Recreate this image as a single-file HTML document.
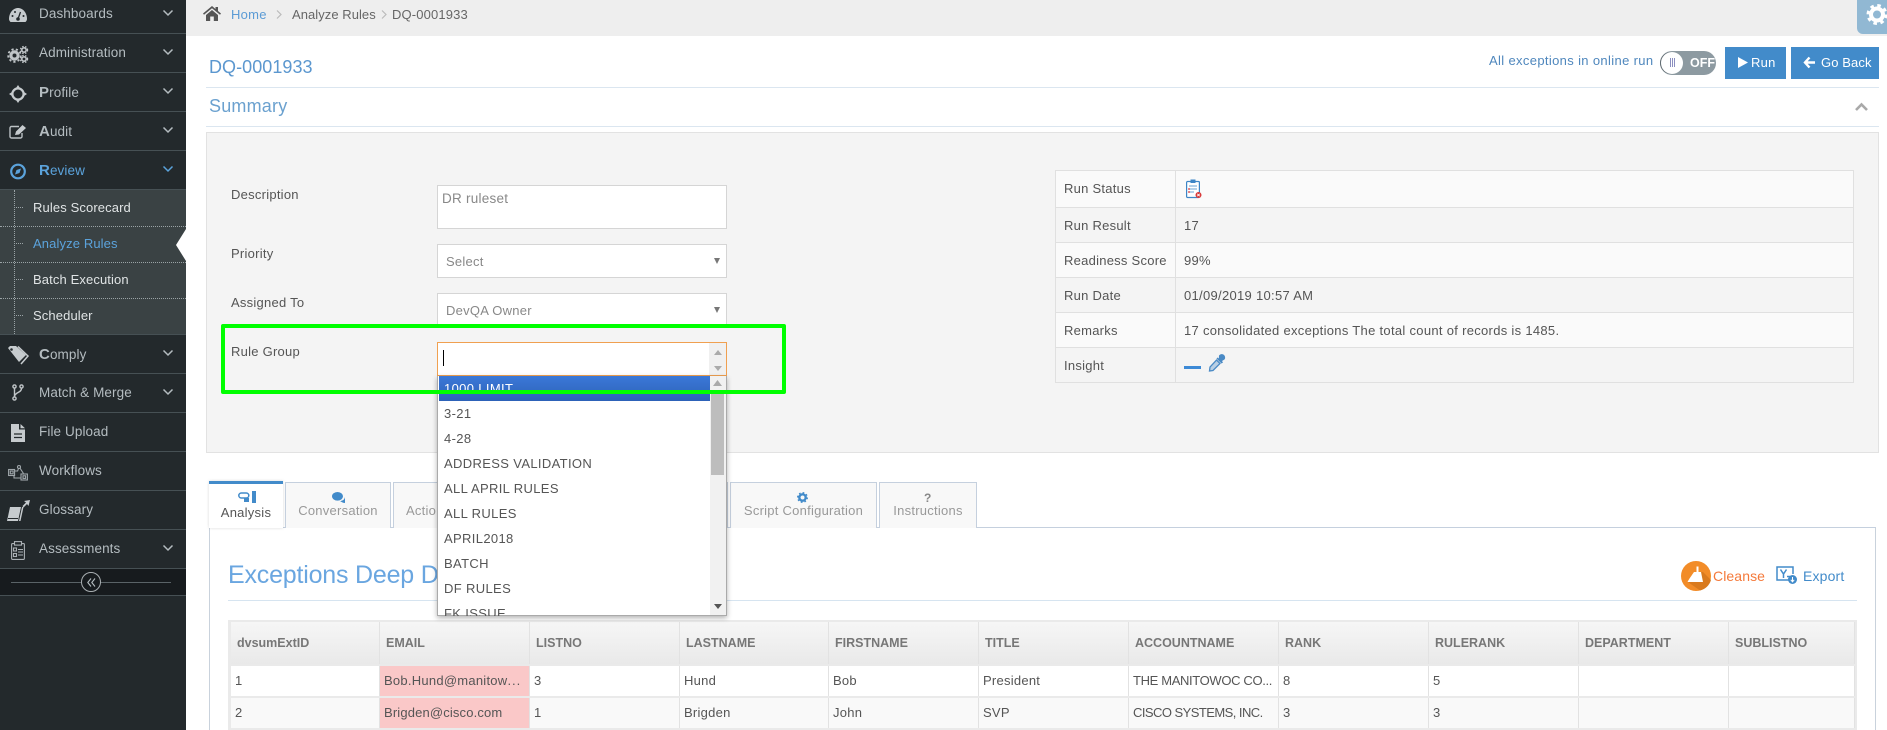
<!DOCTYPE html>
<html lang="en"><head><meta charset="utf-8"><title>DQ-0001933</title>
<style>
*{box-sizing:border-box}
html,body{margin:0;padding:0;width:1887px;height:730px;overflow:hidden;background:#fff}
body{position:relative;font-family:"Liberation Sans",Arial,sans-serif;font-size:13px;letter-spacing:.25px;color:#555}
.a{position:absolute}
.t{position:absolute;line-height:20px;height:20px;white-space:nowrap}
.sb{position:absolute;left:0;top:0;width:186px;height:730px;background:#23292c}
.sep{position:absolute;left:0;width:186px;height:1px;background:#465054}
.nav{position:absolute;left:39px;margin-top:1px;line-height:20px;height:20px;color:#b4bcc0;font-size:13.5px;letter-spacing:.1px;white-space:nowrap}
.nav b{font-size:15px}
.sub{position:absolute;left:33px;margin-top:1px;line-height:20px;height:20px;color:#e0e4e5;font-size:13px;letter-spacing:.12px;white-space:nowrap}
.dot{position:absolute;left:0;width:186px;border-top:1px dotted #9aa3a6}
.dh{position:absolute;left:16px;width:7px;border-top:1px dotted #9aa3a6}
svg{position:absolute;overflow:visible}
.chev{position:absolute;left:163px;width:10px;height:6px}
.field{position:absolute;left:437px;width:290px;background:#fff;border:1px solid #d5d5d5}
.lab{position:absolute;left:231px;margin-top:1px;line-height:20px;height:20px;color:#555}
.arr{position:absolute;left:714px;width:0;height:0;border-left:3.5px solid transparent;border-right:3.5px solid transparent;border-top:6px solid #777}
.rt{position:absolute;left:1055px;width:799px;border:1px solid #e0e0e0}
.rt div{position:absolute}
.rw{left:0;width:797px;border-bottom:1px solid #e0e0e0}
.rl{position:absolute;left:1064px;margin-top:1px;line-height:20px;color:#555;white-space:nowrap}
.rv{position:absolute;left:1184px;margin-top:1px;line-height:20px;color:#555;white-space:nowrap;letter-spacing:.3px}
.tab{position:absolute;top:482px;height:46px;border:1px solid #c5d0de;border-bottom:none;background:#f8f8f8;text-align:center;color:#999;line-height:20px;padding-top:18px;white-space:nowrap}
.opt{position:absolute;left:444px;margin-top:1px;line-height:20px;height:20px;color:#555;white-space:nowrap;letter-spacing:.35px}
.th{position:absolute;top:622px;height:42px;line-height:42px;font-weight:bold;color:#777;font-size:12.5px;padding-left:6px;letter-spacing:0;white-space:nowrap;background:linear-gradient(#f6f6f6,#e9e9e9);border-right:1px solid #e2e2e2}
.td{position:absolute;height:30px;line-height:30px;color:#555;padding-left:4px;white-space:nowrap;overflow:hidden;border-right:1px solid #e2e2e2}
.dots{letter-spacing:1px}
</style></head><body>

<!-- Sidebar -->
<div class="sb"></div>
<div class="a" style="left:0;top:190px;width:186px;height:144px;background:#3a4244"></div>
<div class="a" style="left:0;top:569px;width:186px;height:26px;background:#171b1e"></div>
<div class="sep" style="top:33px"></div><div class="sep" style="top:72px"></div><div class="sep" style="top:111px"></div><div class="sep" style="top:150px"></div><div class="sep" style="top:189px"></div>
<div class="sep" style="top:334px"></div><div class="sep" style="top:373px"></div><div class="sep" style="top:412px"></div><div class="sep" style="top:451px"></div><div class="sep" style="top:490px"></div><div class="sep" style="top:529px"></div><div class="sep" style="top:568px"></div><div class="sep" style="top:595px"></div>

<div class="nav" style="top:3px">Dashboards</div>
<div class="nav" style="top:42px">Administration</div>
<div class="nav" style="top:82px"><b>P</b>rofile</div>
<div class="nav" style="top:121px"><b>A</b>udit</div>
<div class="nav" style="top:160px;color:#5ba3dc"><b>R</b>eview</div>
<div class="sub" style="top:197px">Rules Scorecard</div>
<div class="sub" style="top:233px;color:#5ba3dc">Analyze Rules</div>
<div class="sub" style="top:269px">Batch Execution</div>
<div class="sub" style="top:305px">Scheduler</div>
<div class="nav" style="top:344px"><b>C</b>omply</div>
<div class="nav" style="top:382px">Match &amp; Merge</div>
<div class="nav" style="top:421px">File Upload</div>
<div class="nav" style="top:460px">Workflows</div>
<div class="nav" style="top:499px">Glossary</div>
<div class="nav" style="top:538px">Assessments</div>

<div class="a" style="left:14px;top:190px;height:144px;border-left:1px dotted #9aa3a6"></div>
<div class="dot" style="top:226px"></div><div class="dot" style="top:262px"></div><div class="dot" style="top:298px"></div>
<div class="dh" style="top:207px"></div><div class="dh" style="top:243px"></div><div class="dh" style="top:279px"></div><div class="dh" style="top:315px"></div>
<svg style="left:176px;top:229px" width="10" height="32"><path d="M10 0L0 16L10 32Z" fill="#fff"/></svg>

<!-- chevrons -->
<svg class="chev" style="top:10px" viewBox="0 0 10 6"><path d="M.5.5L5 5L9.500.5" fill="none" stroke="#b4bcc0" stroke-width="1.500"/></svg>
<svg class="chev" style="top:49px" viewBox="0 0 10 6"><path d="M.5.5L5 5L9.500.5" fill="none" stroke="#b4bcc0" stroke-width="1.500"/></svg>
<svg class="chev" style="top:88px" viewBox="0 0 10 6"><path d="M.5.5L5 5L9.500.5" fill="none" stroke="#b4bcc0" stroke-width="1.500"/></svg>
<svg class="chev" style="top:127px" viewBox="0 0 10 6"><path d="M.5.5L5 5L9.500.5" fill="none" stroke="#b4bcc0" stroke-width="1.500"/></svg>
<svg class="chev" style="top:166px" viewBox="0 0 10 6"><path d="M.5.5L5 5L9.500.5" fill="none" stroke="#5ba3dc" stroke-width="1.500"/></svg>
<svg class="chev" style="top:350px" viewBox="0 0 10 6"><path d="M.5.5L5 5L9.500.5" fill="none" stroke="#b4bcc0" stroke-width="1.500"/></svg>
<svg class="chev" style="top:389px" viewBox="0 0 10 6"><path d="M.5.5L5 5L9.500.5" fill="none" stroke="#b4bcc0" stroke-width="1.500"/></svg>
<svg class="chev" style="top:545px" viewBox="0 0 10 6"><path d="M.5.5L5 5L9.500.5" fill="none" stroke="#b4bcc0" stroke-width="1.500"/></svg>

<!-- sidebar icons -->
<svg style="left:9px;top:8px" width="18" height="14" viewBox="0 0 18 14"><path d="M0 11C0 5 4 0 9 0s9 5 9 11c0 1-.5 2-1.500 3H1.500C.5 13 0 12 0 11Z" fill="#c6cbce"/><circle cx="9" cy="11" r="1.800" fill="#23292c"/><path d="M9 11L11.500 4" stroke="#23292c" stroke-width="1.300"/><circle cx="3.500" cy="8" r="1" fill="#23292c"/><circle cx="6" cy="4" r="1" fill="#23292c"/><circle cx="14.500" cy="8" r="1" fill="#23292c"/></svg>
<svg style="left:8px;top:46px" width="20" height="17" viewBox="0 0 20 17"><circle cx="6.500" cy="9.500" r="3.600" fill="none" stroke="#c0c5c8" stroke-width="3.200"/><circle cx="6.500" cy="9.500" r="6.300" fill="none" stroke="#c0c5c8" stroke-width="1.800" stroke-dasharray="2.200 2.200"/><circle cx="16" cy="4" r="2.200" fill="none" stroke="#c0c5c8" stroke-width="1.600"/><circle cx="16" cy="4" r="3.600" fill="none" stroke="#c0c5c8" stroke-width="1.200" stroke-dasharray="1.500 1.500"/><circle cx="16" cy="13" r="2.200" fill="none" stroke="#c0c5c8" stroke-width="1.600"/><circle cx="16" cy="13" r="3.600" fill="none" stroke="#c0c5c8" stroke-width="1.200" stroke-dasharray="1.500 1.500"/></svg>
<svg style="left:9px;top:85px" width="18" height="18" viewBox="0 0 18 18"><circle cx="9" cy="9" r="5.600" fill="none" stroke="#c6cbce" stroke-width="2.200"/><path d="M9 0L12 4.500H6ZM9 18L6 13.500H12ZM0 9L4.500 6V12ZM18 9L13.500 12V6Z" fill="#c6cbce"/></svg>
<svg style="left:9px;top:125px" width="18" height="14" viewBox="0 0 18 14"><path d="M10 1.500H2.500A1.500 1.500 0 0 0 1 3v8.500A1.500 1.500 0 0 0 2.500 13h9a1.500 1.500 0 0 0 1.500-1.500V8" fill="none" stroke="#bcc2c5" stroke-width="1.400"/><path d="M6 10L7 6.500L13.500 0L17 3L10 9.500Z" fill="#c6cbce"/></svg>
<svg style="left:10px;top:163px" width="16" height="17" viewBox="0 0 16 17"><circle cx="8" cy="8.500" r="6.800" fill="none" stroke="#5ba3dc" stroke-width="2.200"/><path d="M11 5.500L9.500 10L5 11.500L6.500 7Z" fill="#5ba3dc"/></svg>
<svg style="left:8px;top:346px" width="20" height="18" viewBox="0 0 20 18"><path d="M0 2L2 0H8L18 9L11 16Z" fill="#c6cbce"/><path d="M10 0.500L20 10L13 18" fill="none" stroke="#c6cbce" stroke-width="1.500"/><circle cx="3.500" cy="3.500" r="1.300" fill="#23292c"/></svg>
<svg style="left:12px;top:384px" width="12" height="17" viewBox="0 0 12 17"><g fill="none" stroke="#c0c5c8" stroke-width="1.400"><circle cx="2.500" cy="2.500" r="1.600"/><circle cx="9.500" cy="2.500" r="1.600"/><circle cx="2.500" cy="14.500" r="1.600"/><path d="M2.500 4.500V12.500M9.500 4.500C9.500 8.500 4 8 2.500 12"/></g></svg>
<svg style="left:11px;top:424px" width="14" height="18" viewBox="0 0 14 18"><path d="M0 0H8V5.500H14V18H0Z" fill="#c6cbce"/><path d="M9.500 0L14 4.200H9.500Z" fill="#c6cbce"/><path d="M3 10H11M3 13.500H11" stroke="#23292c" stroke-width="1.300"/></svg>
<svg style="left:8px;top:465px" width="20" height="16" viewBox="0 0 20 16"><g fill="none" stroke="#9fa6aa" stroke-width="1.100"><rect x=".6" y="4.500" width="6" height="6"/><rect x="2.300" y="6" width="2.800" height="2.800"/><rect x="13" y="9" width="6.400" height="6"/><rect x="15" y="10.800" width="2.600" height="2.600"/><circle cx="11" cy="2" r="1.500"/><path d="M6.600 6H9.600L10.500 3.500M12 3.200L15.500 8.500M6 11V13H12.500"/></g></svg>
<svg style="left:7px;top:500px" width="23" height="22" viewBox="0 0 23 22"><path d="M3 7H14L11 21H0Z" fill="#c6cbce"/><path d="M15 7H16.500L13.500 21H12Z" fill="#c6cbce"/><path d="M1 18.500H11" stroke="#23292c"/><path d="M23 0L21.500 6L20 4L16.500 7.500L15.500 6L19 2.500L17 1Z" fill="#c6cbce"/></svg>
<svg style="left:11px;top:541px" width="14" height="19" viewBox="0 0 14 19"><g fill="none" stroke="#aab0b4" stroke-width="1.100"><rect x=".6" y="2.600" width="12.800" height="15.800" rx="1"/><rect x="3.500" y=".6" width="7" height="3.500" fill="#23292c"/><rect x="2.500" y="7" width="3" height="3"/><rect x="2.500" y="12.500" width="3" height="3"/><path d="M7 8.500H12M7 11H12M7 14H12"/></g></svg>

<!-- collapse -->
<div class="a" style="left:11px;top:582px;width:160px;height:1px;background:#5a6367"></div>
<div class="a" style="left:81px;top:572px;width:20px;height:20px;border-radius:50%;border:1px solid #a9afb2;background:#171b1e"></div>
<svg style="left:87px;top:578px" width="9" height="9" viewBox="0 0 9 9"><path d="M4 .5L.8 4.500L4 8.500M8 .5L4.800 4.500L8 8.500" fill="none" stroke="#b4bcc0" stroke-width="1.100"/></svg>

<!-- Breadcrumb -->
<div class="a" style="left:186px;top:0;width:1701px;height:36px;background:#eee"></div>
<svg style="left:203px;top:6px" width="18" height="15" viewBox="0 0 18 15"><path d="M0 7.500L9 0L12.500 3V1H15V5L18 7.500L17 8.800L9 2.300L1 8.800Z" fill="#555"/><path d="M3 9L9 4L15 9V15H10.800V10.500H7.200V15H3Z" fill="#555"/></svg>
<div class="t" style="left:231px;top:5px;color:#5b9bd5;font-size:13px">Home</div>
<svg style="left:276px;top:10px" width="6" height="9" viewBox="0 0 6 9"><path d="M1 .5L5 4.500L1 8.500" fill="none" stroke="#bbb" stroke-width="1.200"/></svg>
<div class="t" style="left:292px;top:5px;color:#666;letter-spacing:.05px">Analyze Rules</div>
<svg style="left:381px;top:10px" width="6" height="9" viewBox="0 0 6 9"><path d="M1 .5L5 4.500L1 8.500" fill="none" stroke="#bbb" stroke-width="1.200"/></svg>
<div class="t" style="left:392px;top:5px;color:#666;letter-spacing:.15px">DQ-0001933</div>

<!-- Settings -->
<div class="a" style="left:1857px;top:0;width:30px;height:34px;background:#91b8d3;border-bottom-left-radius:6px"></div>
<svg style="left:1867px;top:4px" width="20" height="21" viewBox="0 0 20 21"><circle cx="10" cy="10.500" r="6" fill="none" stroke="#fff" stroke-width="4"/><circle cx="10" cy="10.500" r="9" fill="none" stroke="#fff" stroke-width="3" stroke-dasharray="3.500 3.570"/></svg>

<!-- Heading -->
<div class="t" style="left:209px;top:57px;font-size:18px;color:#5b97cf;letter-spacing:.05px">DQ-0001933</div>
<div class="t" style="left:1489px;top:51px;color:#4f87bd;letter-spacing:.35px">All exceptions in online run</div>
<div class="a" style="left:1660px;top:51px;width:56px;height:24px;border-radius:12px;background:#8d9aa1"></div>
<div class="a" style="left:1661px;top:52px;width:22px;height:22px;border-radius:50%;background:#fff;box-shadow:-1px 0 0 #5f6a70"></div>
<div class="a" style="left:1670px;top:58px;width:5px;height:9px;border-left:1px solid #8b8fc0;border-right:1px solid #8b8fc0"><div style="margin-left:1px;width:1px;height:9px;background:#8b8fc0"></div></div>
<div class="t" style="left:1690px;top:53px;color:#fff;font-weight:bold;font-size:12.5px;letter-spacing:0">OFF</div>
<div class="a" style="left:1725px;top:47px;width:61px;height:32px;background:#428bca"></div>
<svg style="left:1738px;top:57px" width="10" height="11"><path d="M0 0L10 5.500L0 11Z" fill="#fff"/></svg>
<div class="t" style="left:1751px;top:53px;color:#fff">Run</div>
<div class="a" style="left:1791px;top:47px;width:88px;height:32px;background:#428bca"></div>
<svg style="left:1804px;top:57px" width="11" height="11" viewBox="0 0 11 11"><path d="M5.500 .5L1 5.500L5.500 10.500M1.500 5.500H11" fill="none" stroke="#fff" stroke-width="2.400"/></svg>
<div class="t" style="left:1821px;top:53px;color:#fff;letter-spacing:.1px">Go Back</div>

<div class="a" style="left:206px;top:87px;width:1673px;height:1px;background:#dbe6f0"></div>
<div class="t" style="left:209px;top:96px;font-size:18px;color:#6ba1cf;letter-spacing:.2px">Summary</div>
<svg style="left:1855px;top:103px" width="13" height="8" viewBox="0 0 13 8"><path d="M1 7L6.500 1.500L12 7" fill="none" stroke="#a9a9a9" stroke-width="2.600"/></svg>
<div class="a" style="left:206px;top:126px;width:1673px;height:1px;background:#dbe6f0"></div>

<!-- Panel -->
<div class="a" style="left:206px;top:132px;width:1673px;height:321px;background:#f4f4f4;border:1px solid #e2e2e2"></div>
<div class="lab" style="top:184px">Description</div>
<div class="lab" style="top:243px">Priority</div>
<div class="lab" style="top:292px">Assigned To</div>
<div class="lab" style="top:341px">Rule Group</div>
<div class="field" style="top:185px;height:44px"></div>
<div class="t" style="left:442px;top:189px;color:#888;font-size:13.5px">DR ruleset</div>
<div class="field" style="top:244px;height:34px"></div>
<div class="t" style="left:446px;top:252px;color:#888">Select</div>
<div class="arr" style="top:258px"></div>
<div class="field" style="top:293px;height:34px"></div>
<div class="t" style="left:446px;top:301px;color:#888">DevQA Owner</div>
<div class="arr" style="top:307px"></div>
<div class="field" style="top:342px;height:34px;border-color:#f0a050"></div>
<div class="a" style="left:709px;top:343px;width:17px;height:32px;background:#f0f0f0"></div>
<div class="a" style="left:443px;top:350px;width:1px;height:16px;background:#000"></div>
<svg style="left:714px;top:350px" width="8" height="21"><path d="M0 5L4 0L8 5Z" fill="#aaa"/><path d="M0 16H8L4 21Z" fill="#aaa"/></svg>

<!-- Right table -->
<div class="rt" style="top:170px;height:213px;background:#fafafa">
<div class="rw" style="top:0;height:37px;background:#fafafa"></div>
<div class="rw" style="top:37px;height:35px;background:#f4f4f4"></div>
<div class="rw" style="top:72px;height:35px;background:#fafafa"></div>
<div class="rw" style="top:107px;height:35px;background:#f4f4f4"></div>
<div class="rw" style="top:142px;height:35px;background:#fafafa"></div>
<div class="rw" style="top:177px;height:34px;background:#f4f4f4;border-bottom:none"></div>
<div style="left:119px;top:0;width:1px;height:211px;background:#e0e0e0"></div>
</div>
<div class="rl" style="top:178px">Run Status</div><div class="rl" style="top:215px">Run Result</div><div class="rl" style="top:250px">Readiness Score</div><div class="rl" style="top:285px">Run Date</div><div class="rl" style="top:320px">Remarks</div><div class="rl" style="top:355px">Insight</div>
<div class="rv" style="top:215px">17</div><div class="rv" style="top:250px">99%</div><div class="rv" style="top:285px">01/09/2019 10:57 AM</div><div class="rv" style="top:320px">17 consolidated exceptions The total count of records is 1485.</div>
<svg style="left:1186px;top:179px" width="16" height="20" viewBox="0 0 16 20"><rect x=".6" y="2.500" width="12.800" height="16" rx="1" fill="#fff" stroke="#3d85c6" stroke-width="1.200"/><rect x="4.500" y="0.500" width="5" height="3.500" fill="#3d85c6"/><path d="M3 7H11M3 10H11M3 13H8" stroke="#6aa3d6"/><circle cx="3" cy="10" r=".9" fill="#d33"/><circle cx="3" cy="13" r=".9" fill="#d33"/><circle cx="12.500" cy="16" r="3" fill="#d93a3a"/><path d="M11.300 14.800L13.700 17.200M13.700 14.800L11.300 17.200" stroke="#fff" stroke-width=".8"/></svg>
<div class="a" style="left:1184px;top:366px;width:17px;height:3px;background:#3d8ad6"></div>
<svg style="left:1208px;top:354px" width="18" height="18" viewBox="0 0 18 18"><path d="M11 1.500A3 3 0 0 1 16.500 5.500L14 7L15 8.500L13.500 9.500L8.500 4.500L9.500 3.500L10.800 4.500Z" fill="#4a8ac5"/><path d="M8.500 6L12 9.500L5 16.500L1.500 17L2 13Z" fill="#4a8ac5" fill-opacity=".35" stroke="#4a8ac5" stroke-width="1.300"/></svg>

<!-- Tabs -->
<div class="a" style="left:209px;top:527px;width:1667px;height:1px;background:#c5d0de"></div>
<div class="a" style="left:209px;top:528px;width:1px;height:202px;background:#c9d2dc"></div>
<div class="a" style="left:1875px;top:528px;width:1px;height:202px;background:#c9d2dc"></div>
<div class="tab" style="left:209px;top:481px;width:74px;height:47px;background:#fff;border:none;border-top:3px solid #428bca;color:#555;padding-top:19px;box-shadow:0 0 3px rgba(0,0,0,.15)">Analysis</div>
<svg style="left:238px;top:491px" width="18" height="12" viewBox="0 0 18 12"><rect x=".8" y="2" width="10" height="5" rx="2.500" fill="none" stroke="#428bca" stroke-width="1.500"/><path d="M14 0H18V12H14ZM6 7H11V11H6Z" fill="#428bca"/></svg>
<div class="tab" style="left:285px;width:106px">Conversation</div>
<svg style="left:332px;top:492px" width="13" height="11" viewBox="0 0 13 11"><ellipse cx="5.500" cy="4.300" rx="5.500" ry="4.300" fill="#428bca"/><path d="M8 9C10 9 12.500 8 13 5C13 8 13 10 13 11C11 11 9.500 10 8 9Z" fill="#428bca"/></svg>
<div class="tab" style="left:393px;width:335px;text-align:left;padding-left:12px">Actions</div>
<div class="tab" style="left:730px;width:147px">Script Configuration</div>
<svg style="left:797px;top:492px" width="11" height="11" viewBox="0 0 11 11"><circle cx="5.500" cy="5.500" r="3.200" fill="none" stroke="#428bca" stroke-width="2.400"/><circle cx="5.500" cy="5.500" r="4.800" fill="none" stroke="#428bca" stroke-width="1.400" stroke-dasharray="1.700 2.060"/></svg>
<div class="tab" style="left:879px;width:98px">Instructions</div>
<div class="t" style="left:924px;top:488px;color:#888;font-weight:bold;font-size:12px">?</div>

<div class="t" style="left:228px;top:555px;height:40px;line-height:40px;font-size:25px;color:#6aa6e0;letter-spacing:-.2px">Exceptions Deep Dive</div>

<!-- Cleanse / Export -->
<svg style="left:1681px;top:561px" width="30" height="30" viewBox="0 0 30 30"><circle cx="15" cy="15" r="15" fill="#f28c28"/><path d="M7 21L14 11H22L30 19A15 15 0 0 1 19 29.500Z" fill="#d97a1e"/><path d="M13 11H15.500V5.500H17.500V11H20L22 21H6.500C8 18 11 14 13 11Z" fill="#fff"/></svg>
<div class="t" style="left:1713px;top:566px;font-size:14px;color:#f5793a;letter-spacing:.1px">Cleanse</div>
<svg style="left:1776px;top:566px" width="21" height="19" viewBox="0 0 21 19"><path d="M14 14H1V1H17V8" fill="none" stroke="#428bca" stroke-width="1.500"/><path d="M4.500 3.500L7.500 8L10.500 3.500M7.500 8V12" fill="none" stroke="#428bca" stroke-width="1.500"/><path d="M11 10.500H14" stroke="#428bca" stroke-width="1.500"/><circle cx="16.500" cy="13.500" r="4.500" fill="#428bca"/><path d="M16.500 11V15M14.800 13.800L16.500 15.800L18.200 13.800" stroke="#fff" fill="none"/></svg>
<div class="t" style="left:1803px;top:566px;font-size:14px;color:#428bca;letter-spacing:.15px">Export</div>
<div class="a" style="left:228px;top:600px;width:1629px;height:1px;background:#d6e4f0"></div>

<!-- Data table -->
<div class="a" style="left:228px;top:620px;width:1629px;height:110px;background:#eaeaea"></div>
<div class="th" style="left:231px;width:149px">dvsumExtID</div>
<div class="th" style="left:380px;width:150px">EMAIL</div>
<div class="th" style="left:530px;width:150px">LISTNO</div>
<div class="th" style="left:680px;width:149px">LASTNAME</div>
<div class="th" style="left:829px;width:150px">FIRSTNAME</div>
<div class="th" style="left:979px;width:150px">TITLE</div>
<div class="th" style="left:1129px;width:150px">ACCOUNTNAME</div>
<div class="th" style="left:1279px;width:150px">RANK</div>
<div class="th" style="left:1429px;width:150px">RULERANK</div>
<div class="th" style="left:1579px;width:150px">DEPARTMENT</div>
<div class="th" style="left:1729px;width:126px">SUBLISTNO</div>

<div class="td" style="top:666px;left:231px;width:149px;background:#fff">1</div>
<div class="td" style="top:666px;left:380px;width:150px;background:#fac8c8">Bob.Hund@manitow<span class="dots">...</span></div>
<div class="td" style="top:666px;left:530px;width:150px;background:#fff">3</div>
<div class="td" style="top:666px;left:680px;width:149px;background:#fff">Hund</div>
<div class="td" style="top:666px;left:829px;width:150px;background:#fff">Bob</div>
<div class="td" style="top:666px;left:979px;width:150px;background:#fff">President</div>
<div class="td" style="top:666px;left:1129px;width:150px;background:#fff;letter-spacing:-.35px">THE MANITOWOC CO...</div>
<div class="td" style="top:666px;left:1279px;width:150px;background:#fff">8</div>
<div class="td" style="top:666px;left:1429px;width:150px;background:#fff">5</div>
<div class="td" style="top:666px;left:1579px;width:150px;background:#fff"></div>
<div class="td" style="top:666px;left:1729px;width:126px;background:#fff"></div>

<div class="td" style="top:698px;left:231px;width:149px;background:#f9f9f9">2</div>
<div class="td" style="top:698px;left:380px;width:150px;background:#fac8c8;letter-spacing:.15px">Brigden@cisco.com</div>
<div class="td" style="top:698px;left:530px;width:150px;background:#f9f9f9">1</div>
<div class="td" style="top:698px;left:680px;width:149px;background:#f9f9f9">Brigden</div>
<div class="td" style="top:698px;left:829px;width:150px;background:#f9f9f9">John</div>
<div class="td" style="top:698px;left:979px;width:150px;background:#f9f9f9">SVP</div>
<div class="td" style="top:698px;left:1129px;width:150px;background:#f9f9f9;letter-spacing:-.55px">CISCO SYSTEMS, INC.</div>
<div class="td" style="top:698px;left:1279px;width:150px;background:#f9f9f9">3</div>
<div class="td" style="top:698px;left:1429px;width:150px;background:#f9f9f9">3</div>
<div class="td" style="top:698px;left:1579px;width:150px;background:#f9f9f9"></div>
<div class="td" style="top:698px;left:1729px;width:126px;background:#f9f9f9"></div>

<!-- Dropdown -->
<div class="a" style="left:437px;top:376px;width:290px;height:240px;background:#fff;border:1px solid #aaa;border-top:none;box-shadow:0 2px 5px rgba(0,0,0,.3);overflow:hidden">
  <div class="a" style="left:1px;top:0;width:271px;height:25px;background:linear-gradient(#3b78d8,#2d62b8)"></div>
  <div class="a" style="left:272px;top:0;width:17px;height:240px;background:#f1f1f1"></div>
  <div class="a" style="left:273px;top:17px;width:13px;height:82px;background:#bdbdbd"></div>
</div>
<svg style="left:713px;top:380px" width="9" height="6"><path d="M0 6L4.500 0L9 6Z" fill="#aaa"/></svg>
<svg style="left:714px;top:604px" width="8" height="5"><path d="M0 0H8L4 5Z" fill="#555"/></svg>
<div class="opt" style="top:378px;color:#fff">1000 LIMIT</div>
<div class="opt" style="top:403px">3-21</div>
<div class="opt" style="top:428px">4-28</div>
<div class="opt" style="top:453px">ADDRESS VALIDATION</div>
<div class="opt" style="top:478px">ALL APRIL RULES</div>
<div class="opt" style="top:503px">ALL RULES</div>
<div class="opt" style="top:528px">APRIL2018</div>
<div class="opt" style="top:553px">BATCH</div>
<div class="opt" style="top:578px">DF RULES</div>
<div class="a" style="left:444px;top:604px;height:12px;overflow:hidden"><div style="line-height:20px;color:#555;letter-spacing:.35px">FK ISSUE</div></div>

<!-- Green highlight -->
<div class="a" style="left:221px;top:324px;width:565px;height:70px;border:4px solid #00ff00;border-radius:2px"></div>
</body></html>
